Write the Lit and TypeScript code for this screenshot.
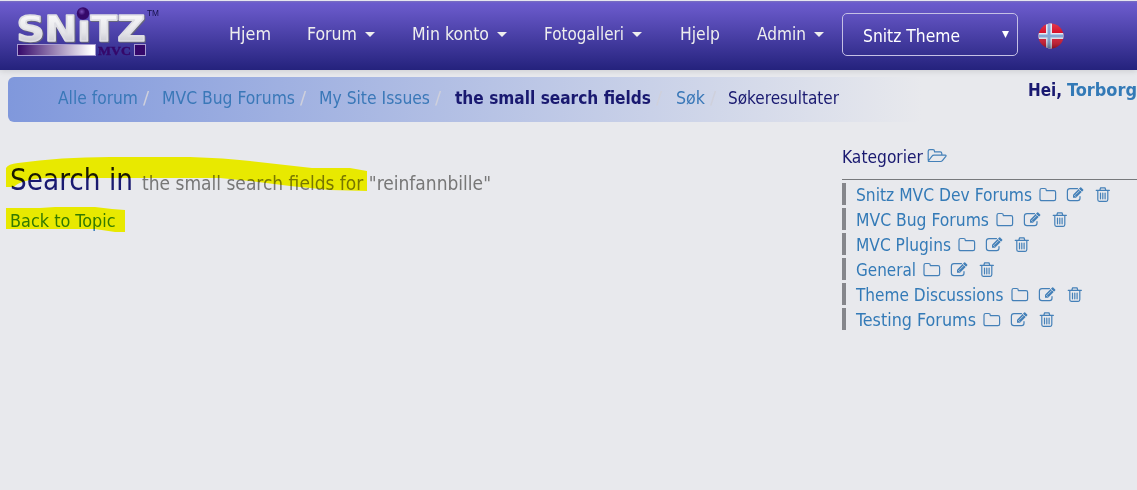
import { LitElement, html, svg, css } from "lit";
import { customElement, property } from "lit/decorators.js";

/** Text stretched horizontally to a given advance width. */
@customElement("fit-text")
class FitText extends LitElement {
  @property({ type: Number }) w = 0;
  static styles = css`
    :host { display: block; flex: none; white-space: nowrap; }
    span { display: inline-block; transform-origin: 0 0; }
  `;
  firstUpdated() {
    const span = this.renderRoot.querySelector("span")!;
    const natural = span.getBoundingClientRect().width;
    this.style.width = this.w + "px";
    span.style.transform = `scaleX(${this.w / natural})`;
  }
  render() {
    return html`<span><slot></slot></span>`;
  }
}

const icons: Record<string, any> = {
  folder: svg`<path d="M1 4.2Q1 2.5 2.7 2.5H5.6Q7.3 2.5 7.3 4.2V4.6H15Q16.6 4.6 16.6 6.2V13Q16.6 14.6 15 14.6H2.7Q1 14.6 1 13Z"/>`,
  open: svg`<path d="M1.2 13.2V4.2Q1.2 2.6 2.8 2.6H6Q7.5 2.6 7.5 4.2V4.8H13.2Q14.8 4.8 14.8 6.4V8.2M1.4 14 5 9.2Q5.7 8.2 7 8.2H18.2Q19.6 8.2 18.8 9.3L15.6 13.4Q14.8 14.5 13.5 14.5H2.3Q1 14.5 1.4 14Z"/>`,
  edit: svg`<path d="M11.5 2.6H4Q1.4 2.6 1.4 5V12.2Q1.4 14.6 4 14.6H11.6Q14 14.6 14 12.2V10.6"/><path d="M7 8.7 14.2 1.5Q14.7 1 15.2 1.5L17.2 3.5Q17.7 4 17.2 4.5L10 11.7H7Z" fill="currentColor" stroke="none"/><path d="M8.3 9.1 9.6 10.4M9.8 8.4 13.6 4.6M12.9 2.9 15.8 5.8" stroke="#e8e9ed" stroke-width=".7"/>`,
  trash: svg`<path d="M1.2 4.3H14.4M4.8 4.2 5.6 1.8H10L10.8 4.2M2.8 4.5V13.6Q2.8 15.4 4.3 15.4H11.3Q12.8 15.4 12.8 13.6V4.5M5.5 7V12.8M7.8 7V12.8M10.1 7V12.8"/>`,
};
const icon = (name: string, w = 18) =>
  html`<svg class="ic" width=${w} height="17" viewBox="0 0 ${w} 17">${icons[name]}</svg>`;

@customElement("app-root")
class AppRoot extends LitElement {
  static styles = css`
    :host {
      display: block; height: 490px; overflow: hidden; position: relative;
      background: #e8e9ed; color: #191970;
      font: 17.6px/24px "DejaVu Sans Condensed", "DejaVu Sans", sans-serif;
      font-stretch: condensed;
    }
    svg { display: block; flex: none; }
    .ic { fill: none; stroke: currentColor; stroke-width: 1.2; stroke-linejoin: round; stroke-linecap: round; color: #4480b8; }
    header {
      height: 70px; box-sizing: border-box; display: flex; color: #eee;
      border-top: 1px solid #e4e4ee;
      background: linear-gradient(#7a70c0 0, #6a5acd 2px, #6455c4 10px, #191970 115%);
      box-shadow: 0 1px 6px rgba(0, 0, 0, .13);
    }
    .logo { margin: 5px 0 0 14px; }
    .word { filter: drop-shadow(1px 1.5px 0.5px #66667c); }
    nav { display: flex; width: 613px; margin-left: 69px; padding-top: 21px; }
    .item { display: flex; height: 24px; flex: none; }
    .caret { width: 0; height: 0; margin: 10px 0 0 8px; border: 5px solid transparent; border-top-color: #eee; border-bottom: 0; }
    .select {
      box-sizing: border-box; width: 176px; height: 43px; margin-top: 12px; padding: 10px 8px 0 20px;
      border: 1px solid #c5c0e5; border-radius: 5px; display: flex; justify-content: space-between; color: #fff;
    }
    .arrow { width: 7px; height: 7px; margin-top: 7px; background: #fff; clip-path: polygon(0 0, 100% 0, 50% 100%); }
    .flag { margin: 21px 0 0 20px; }
    .top { display: flex; padding: 7px 0 0 8px; }
    .crumbs {
      display: flex; box-sizing: border-box; width: 914px; height: 45px; padding: 9px 0 0 49.5px; border-radius: 6px;
      background: linear-gradient(90deg, #8098dc, #e8e9ed);
    }
    .sep { flex: none; display: block; padding-left: 5px; color: #cfd0dc; transform: scaleX(1.15); }
    a { color: #337ab7; text-decoration: none; }
    .crumbs a { color: #3a78b8; }
    b, .hello { font-weight: bold; }
    .hello { display: flex; margin-left: 106.5px; padding-top: 1px; gap: 5px; height: 24px; }
    .main { display: flex; justify-content: space-between; }
    .results { padding: 38px 0 0 10px; }
    h2 { margin: 0; display: flex; align-items: baseline; gap: 9px; height: 40px; font-size: 29.3px; font-weight: normal; line-height: 40px; }
    h2 .small { font-size: 19.5px; color: #777; }
    .back { margin-top: 9px; }
    aside { width: 295px; padding-top: 23px; }
    .cat { display: flex; gap: 4px; height: 34px; border-bottom: 1px solid #77797c; }
    .cat svg { margin-top: 2px; }
    ul { list-style: none; margin: 3px 0 0; padding: 0; display: grid; gap: 3px; }
    li { display: flex; height: 22px; line-height: 24px; border-left: 4px solid #85868b; padding-left: 10px; color: #337ab7; }
    li svg { margin-top: 3px; }
    .f { margin-left: 7px; }
    .e { margin-left: 9px; }
    .d { margin-left: 11px; }
    .marker { position: absolute; left: 0; top: 150px; mix-blend-mode: multiply; pointer-events: none; }
  `;

  nav: [string, number, number, boolean][] = [
    ["Hjem", 42, 78, false], ["Forum", 50, 105, true], ["Min konto", 77, 132, true],
    ["Fotogalleri", 80, 136, true], ["Hjelp", 40, 77, false], ["Admin", 49, 79, true],
  ];
  crumbs: [string, number, number][] = [
    ["Alle forum", 80, 104], ["MVC Bug Forums", 133, 157], ["My Site Issues", 111, 136],
    ["the small search fields", 196, 221], ["Søk", 29, 52], ["Søkeresultater", 111, 111],
  ];
  cats: [string, number][] = [
    ["Snitz MVC Dev Forums", 176], ["MVC Bug Forums", 133], ["MVC Plugins", 95],
    ["General", 60], ["Theme Discussions", 147.5], ["Testing Forums", 120],
  ];

  render() {
    return html`
      <header>
        <svg class="logo" width="146" height="54" viewBox="14 6 146 54">
          <defs>
            <linearGradient id="m" x1="0" x2="0" y1="0" y2="1"><stop offset="0" stop-color="#fff"/><stop offset=".6" stop-color="#e4e4e8"/><stop offset="1" stop-color="#b9b9c4"/></linearGradient>
            <linearGradient id="p"><stop offset="0" stop-color="#35086a"/><stop offset=".95" stop-color="#fff"/></linearGradient>
            <radialGradient id="o" cx=".4" cy=".35"><stop offset="0" stop-color="#7a50b8"/><stop offset=".6" stop-color="#35086a"/></radialGradient>
          </defs>
          <text class="word" x="16.5" y="40.5" fill="url(#m)" stroke="#dedee4" font-family="DejaVu Sans" font-weight="bold" font-stretch="normal" font-size="35" stroke-width="1.6" stroke-linejoin="round" textLength="129" lengthAdjust="spacingAndGlyphs">SNıTZ</text>
          <circle cx="83" cy="13.5" r="6.2" fill="url(#o)"/>
          <text x="147" y="15.5" font-family="Liberation Sans" font-size="8.5" fill="#15104a" textLength="12" lengthAdjust="spacingAndGlyphs">TM</text>
          <rect x="17.5" y="44.5" width="78" height="11" fill="url(#p)" stroke="#a79bd0"/>
          <text x="98" y="54.5" font-family="Liberation Serif" font-weight="bold" font-size="13" fill="#35086a" stroke="#35086a" stroke-width=".4" textLength="33" lengthAdjust="spacingAndGlyphs">MVC</text>
          <rect x="134.5" y="44.5" width="11" height="11" fill="#35086a" stroke="#a79bd0"/>
        </svg>
        <nav>
          ${this.nav.map(([t, w, total, more]) => html`
            <div class="item" style="width:${total}px"><fit-text .w=${w}>${t}</fit-text>${more ? html`<i class="caret"></i>` : ""}</div>`)}
        </nav>
        <div class="select"><fit-text .w=${97}>Snitz Theme</fit-text><i class="arrow"></i></div>
        <svg class="flag" width="27" height="27" viewBox="0 0 27 27">
          <defs>
            <clipPath id="c"><circle cx="13" cy="14" r="12.5"/></clipPath>
            <linearGradient id="s" x1="0" x2="0" y1="0" y2="1"><stop offset="0" stop-color="#fff" stop-opacity=".2"/><stop offset=".4" stop-color="#fff" stop-opacity="0"/><stop offset="1" stop-color="#000" stop-opacity=".4"/></linearGradient>
          </defs>
          <g clip-path="url(#c)">
            <path fill="#d8102a" d="M0 0H27V27H0Z"/>
            <path stroke="#e4e8f4" stroke-width="6" d="M0 14H27M11 0V27"/>
            <path stroke="#7fa4d6" stroke-width="3" d="M0 14H27M11 0V27"/>
            <path fill="url(#s)" d="M0 0H27V27H0Z"/>
          </g>
        </svg>
      </header>
      <div class="top">
        <div class="crumbs">
          ${this.crumbs.map(([t, w, total], i) => html`
            <div class="item" style="width:${total}px">
              ${i === 3 ? html`<b><fit-text .w=${w}>${t}</fit-text></b>` : i === 5 ? html`<fit-text .w=${w}>${t}</fit-text>` : html`<a><fit-text .w=${w}>${t}</fit-text></a>`}
              ${i < 5 ? html`<span class="sep">/</span>` : ""}
            </div>`)}
        </div>
        <div class="hello"><fit-text .w=${34}>Hei,</fit-text><a><fit-text .w=${70}>Torborg</fit-text></a></div>
      </div>
      <div class="main">
        <div class="results">
          <h2><fit-text .w=${123}>Search in</fit-text><fit-text class="small" .w=${349}>the small search fields for "reinfannbille"</fit-text></h2>
          <a><fit-text class="back" .w=${105.5}>Back to Topic</fit-text></a>
        </div>
        <aside>
          <div class="cat"><fit-text .w=${81}>Kategorier</fit-text>${icon("open", 20)}</div>
          <ul>
            ${this.cats.map(([t, w]) => html`
              <li><fit-text .w=${w}>${t}</fit-text><span class="f">${icon("folder")}</span><span class="e">${icon("edit")}</span><span class="d">${icon("trash", 16)}</span></li>`)}
          </ul>
        </aside>
      </div>
      <svg class="marker" width="375" height="90" viewBox="0 150 375 90" fill="#ff0">
        <path d="M6 168Q8 164 18 163Q60 157 110 157H190Q225 158 250 161L312 168H350L367 171V191L330 190L290 186L250 181L220 178H45Q20 180 14 187H6Z"/>
        <path d="M6 208H40L55 207H95L112 209L125 210V232H115L95 229L6 229Z"/>
      </svg>
    `;
  }
}
